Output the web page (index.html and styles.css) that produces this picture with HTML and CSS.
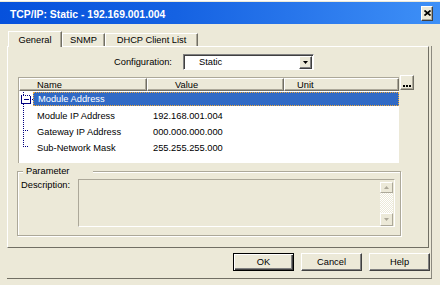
FILE: index.html
```html
<!DOCTYPE html>
<html>
<head>
<meta charset="utf-8">
<title>TCP/IP: Static</title>
<link rel="stylesheet" href="styles.css">
</head>
<body>
<div class="window">
  <div class="titlebar">
    <span class="title">TCP/IP: Static - 192.169.001.004</span>
    <span class="close"><svg width="7" height="6" viewBox="0 0 7 6"><path d="M0.5 0.5 L6.5 5.5 M6.5 0.5 L0.5 5.5" stroke="#000" stroke-width="1.7" fill="none"/></svg></span>
  </div>
  <div class="tabs">
    <div class="tab tab-general active">General</div>
    <div class="tab tab-snmp">SNMP</div>
    <div class="tab tab-dhcp">DHCP Client List</div>
  </div>
  <div class="frame">
    <div class="panel">
      <div class="config">
        <span class="config-label">Configuration:</span>
        <div class="combo">
          <span class="combo-value">Static</span>
          <span class="combo-btn"><svg width="5" height="3" viewBox="0 0 5 3"><path d="M0 0 H5 L2.5 3 Z" fill="#000"/></svg></span>
        </div>
      </div>
      <div class="list-row">
        <div class="list">
          <div class="list-head">
            <div class="th th-name">Name</div>
            <div class="th th-value">Value</div>
            <div class="th th-unit">Unit</div>
          </div>
          <div class="list-body">
            <div class="row">
              <svg class="gutter" width="14" height="16" viewBox="0 0 14 16" shape-rendering="crispEdges">
                <path d="M4.5 0 V3 M4.5 12 V16" stroke="#000080" stroke-dasharray="1 1" fill="none"/>
                <path d="M2.5 4 V11.5 H11.5 V4 M5 7.5 H10" stroke="#000080" fill="none"/>
                <path d="M2 3.5 H12" stroke="#000080" stroke-dasharray="1 1" fill="none"/>
                <rect x="13" y="7" width="1" height="1" fill="#000080"/>
              </svg>
              <div class="item selected">Module Address</div>
            </div>
            <div class="row">
              <svg class="gutter" width="14" height="16" viewBox="0 0 14 16" shape-rendering="crispEdges">
                <path d="M4.5 0 V16" stroke="#000080" stroke-dasharray="1 1" fill="none"/>
              </svg>
              <div class="item"><span class="name">Module IP Address</span><span class="value">192.168.001.004</span></div>
            </div>
            <div class="row">
              <svg class="gutter" width="14" height="16" viewBox="0 0 14 16" shape-rendering="crispEdges">
                <path d="M4.5 0 V16 M4 6.5 H10" stroke="#000080" stroke-dasharray="1 1" fill="none"/>
              </svg>
              <div class="item"><span class="name">Gateway IP Address</span><span class="value">000.000.000.000</span></div>
            </div>
            <div class="row">
              <svg class="gutter" width="14" height="16" viewBox="0 0 14 16" shape-rendering="crispEdges">
                <path d="M4.5 0 V7 M4 6.5 H10" stroke="#000080" stroke-dasharray="1 1" fill="none"/>
              </svg>
              <div class="item"><span class="name">Sub-Network Mask</span><span class="value">255.255.255.000</span></div>
            </div>
          </div>
        </div>
        <div class="more-btn"><i></i><i></i><i></i></div>
      </div>
      <div class="group">
        <span class="legend">Parameter</span>
        <div class="desc-row">
          <span class="desc-label">Description:</span>
          <div class="desc-box">
            <div class="scrollbar">
              <div class="sb-btn sb-up"><svg width="5" height="3" viewBox="0 0 5 3"><path d="M2.5 0 L5 3 H0 Z" fill="#aca899"/></svg></div>
              <div class="sb-track"></div>
              <div class="sb-btn sb-down"><svg width="5" height="3" viewBox="0 0 5 3"><path d="M0 0 H5 L2.5 3 Z" fill="#aca899"/></svg></div>
            </div>
          </div>
        </div>
      </div>
    </div>
    <div class="buttons">
      <button class="btn btn-ok default">OK</button>
      <button class="btn btn-cancel">Cancel</button>
      <button class="btn btn-help">Help</button>
    </div>
  </div>
</div>
</body>
</html>
```

FILE: styles.css
```css
* { box-sizing: border-box; }

html, body {
  margin: 0;
  padding: 0;
}

body {
  width: 440px;
  height: 285px;
  overflow: hidden;
  background: #ece9d8;
  font-family: "Liberation Sans", Arial, sans-serif;
  font-size: 9.3px;
  color: #000;
}

.window {
  border-top: 1px solid #fff;
  padding-top: 1px;
}

/* title bar */
.titlebar {
  height: 22px;
  display: flex;
  align-items: center;
  justify-content: space-between;
  padding: 0 7px 0 10px;
  background: linear-gradient(90deg, #0651dc 0%, #1562e2 40%, #2a78ec 70%, #3e90f7 100%);
}

.title {
  color: #fff;
  font-weight: bold;
  font-size: 10.4px;
  padding-top: 3px;
  white-space: nowrap;
}

.close {
  width: 12px;
  height: 15px;
  display: flex;
  align-items: center;
  justify-content: center;
  background: #ece9d8;
  border: 1px solid;
  border-color: #fff #404040 #404040 #fff;
  box-shadow: inset -1px -1px #aca899;
}

.close svg { display: block; }

/* tabs */
.tabs {
  display: flex;
  align-items: flex-end;
  height: 15px;
  margin-top: 7px;
  padding-left: 8px;
  position: relative;
  z-index: 1;
}

.tab {
  height: 13px;
  display: flex;
  align-items: center;
  justify-content: center;
  border-top: 1px solid #fff;
  border-left: 1px solid #fff;
  border-right: 1px solid #716f64;
  box-shadow: inset -1px 0 #aca899;
  background: #ece9d8;
  white-space: nowrap;
}

.tab.active {
  height: 16px;
  margin-bottom: -1px;
}

.tab-general { width: 54px; padding-top: 1px; }
.tab-snmp { width: 43px; }
.tab-dhcp { width: 93px; }

/* outer frame */
.frame {
  margin-left: 7px;
  width: 425px;
  border-right: 1px solid #8c8a80;
  border-bottom: 1px solid #716f64;
  padding-bottom: 7px;
}

.panel {
  width: 422px;
  height: 202px;
  border-top: 1px solid #fff;
  border-left: 1px solid #fff;
  border-right: 1px solid #716f64;
  border-bottom: 1px solid #716f64;
}

/* configuration row */
.config {
  display: flex;
  align-items: center;
  margin-top: 7px;
  padding-left: 106px;
}

.config-label {
  width: 69px;
  white-space: nowrap;
}

.combo {
  width: 131px;
  height: 16px;
  display: flex;
  align-items: center;
  justify-content: space-between;
  background: #fff;
  border: 1px solid;
  border-color: #808080 #fff #fff #808080;
  box-shadow: inset 1px 1px #404040;
  padding: 0 1px 0 15px;
}

.combo-btn {
  width: 13px;
  height: 13px;
  display: flex;
  align-items: center;
  justify-content: center;
  background: #ece9d8;
  border: 1px solid;
  border-color: #fff #404040 #404040 #fff;
  box-shadow: inset -1px -1px #808080;
}

.combo-btn svg { display: block; }

/* list view */
.list-row {
  display: flex;
  align-items: flex-start;
  margin-top: 7px;
  padding-left: 10px;
}

.list {
  width: 381px;
  height: 86px;
  background: #fff;
  border-top: 1px solid #aca899;
  border-left: 1px solid #aca899;
}

.list-head {
  display: flex;
  height: 13px;
}

.th {
  height: 13px;
  display: flex;
  align-items: center;
  background: #ece9d8;
  border-top: 1px solid #fff;
  border-left: 1px solid #fff;
  border-right: 1px solid #716f64;
  border-bottom: 1px solid #716f64;
  box-shadow: inset -1px -1px #aca899;
}

.th-name { width: 128px; padding-left: 17px; }
.th-value { width: 137px; padding-left: 27px; }
.th-unit { width: 115px; padding-left: 12px; }

.list-body {
  padding-top: 1px;
}

.row {
  display: flex;
  height: 16px;
}

.gutter {
  display: block;
  flex: none;
}

.item {
  flex: 1;
  display: flex;
  align-items: center;
  padding-left: 4px;
  white-space: nowrap;
}

.item.selected {
  height: 14px;
  background: #316ac5;
  color: #fff;
  border: 1px dotted #eea83a;
}

.name { width: 109px; }
.value { padding-left: 7px; }

.more-btn {
  width: 14px;
  height: 15px;
  margin-left: 1px;
  margin-top: -2px;
  display: flex;
  align-items: flex-end;
  justify-content: center;
  gap: 1px;
  padding-bottom: 2px;
  background: #ece9d8;
  border: 1px solid;
  border-color: #fff #716f64 #716f64 #fff;
  box-shadow: inset -1px -1px #aca899;
}

.more-btn i {
  width: 2px;
  height: 2px;
  background: #000;
}

/* parameter group */
.group {
  position: relative;
  margin: 8px 0 0 9px;
  width: 384px;
  height: 65px;
  border: 1px solid #aca899;
  box-shadow: inset 1px 1px #fff, 1px 1px #fff;
  padding: 7px 5px 0 3px;
}

.legend {
  position: absolute;
  top: -6px;
  left: 5px;
  line-height: 11px;
  padding: 0 24px 0 3px;
  background: #ece9d8;
}

.desc-row {
  display: flex;
  align-items: flex-start;
}

.desc-label {
  width: 57px;
  line-height: 11px;
  margin-top: 1px;
  white-space: nowrap;
}

.desc-box {
  width: 317px;
  height: 48px;
  display: flex;
  justify-content: flex-end;
  padding: 2px 1px 0 0;
  background: #ece9d8;
  border: 1px solid;
  border-color: #aca899 #fff #fff #aca899;
}

.scrollbar {
  width: 13px;
  height: 44px;
  display: flex;
  flex-direction: column;
}

.sb-btn {
  display: flex;
  align-items: center;
  justify-content: center;
  background: #ece9d8;
  border: 1px solid;
  border-color: #fff #aca899 #aca899 #fff;
}

.sb-btn svg { display: block; }

.sb-up { height: 11px; }
.sb-down { height: 13px; }

.sb-track {
  flex: 1;
  background: repeating-conic-gradient(#fff 0 25%, #ece9d8 0 50%) 0 0 / 2px 2px;
}

/* dialog buttons */
.buttons {
  display: flex;
  justify-content: flex-end;
  margin-top: 5px;
  padding-right: 1px;
}

.btn {
  width: 61px;
  height: 18px;
  margin: 0;
  padding: 0;
  font-family: inherit;
  font-size: 9.3px;
  color: #000;
  background: #ece9d8;
  border: 1px solid;
  border-color: #fff #404040 #404040 #fff;
  box-shadow: inset -1px -1px #808080;
  border-radius: 0;
}

.btn.default {
  border-color: #000;
  box-shadow: inset 1px 1px #fff, inset -1px -1px #404040, inset -2px -2px #808080;
}

.btn-ok { margin-right: 7px; }
.btn-cancel { margin-right: 7px; }
```
